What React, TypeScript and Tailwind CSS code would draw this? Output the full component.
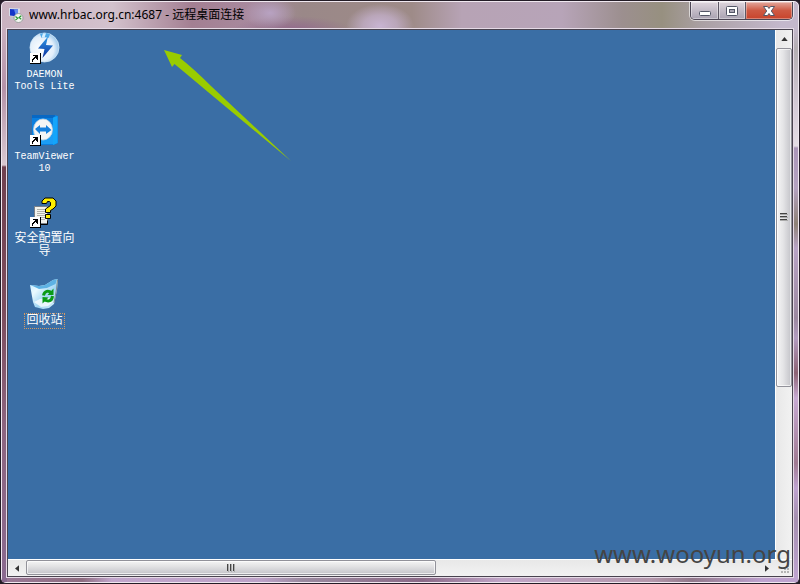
import React from "react";

const mono = "font-['Liberation_Mono','Noto_Sans_CJK_SC',monospace]";
const ui = "font-['Noto_Sans','Noto_Sans_CJK_SC',sans-serif]";

function ShortcutBadge() {
  return (
    <g shapeRendering="crispEdges">
      <rect x="1" y="21" width="11" height="11" fill="#000" />
      <rect x="1" y="21" width="10" height="10" fill="#fff" />
      <path d="M4 23h5v5h-1v-1h-1v-1h-1v1h-1v1h-1v2h-1v-3h1v-1h1v-1h1v-1h-2z" fill="#000" />
    </g>
  );
}

function DaemonIcon() {
  return (
    <svg viewBox="0 0 32 32" className="size-8 shrink-0" aria-hidden="true">
      <defs>
        <radialGradient id="disc" cx="0.4" cy="0.55" r="0.6">
          <stop offset="0" stopColor="#ffffff" />
          <stop offset="0.7" stopColor="#e3effa" />
          <stop offset="1" stopColor="#9cc8ec" />
        </radialGradient>
        <linearGradient id="bolt" x1="0" y1="0" x2="0" y2="1">
          <stop offset="0" stopColor="#2f9be8" />
          <stop offset="1" stopColor="#0b2f9e" />
        </linearGradient>
      </defs>
      <circle cx="15.500" cy="15.500" r="14.500" fill="url(#disc)" stroke="#d4e8f8" strokeWidth="0.8" />
      <path d="M11 1.800A14.500 14.500 0 0 1 21 2l-1.500 4a10 10 0 0 0-7 0z" fill="#4da8e8" />
      <path d="M14 1.200h3l-1.500 4.500h-3z" fill="#d6efff" />
      <path d="M19 4.500 9 16.500l6.500.5L13.500 26 24 13.500l-7-.5z" fill="url(#bolt)" />
      <ShortcutBadge />
    </svg>
  );
}

function TeamViewerIcon() {
  return (
    <svg viewBox="0 0 32 32" className="size-8 shrink-0" aria-hidden="true">
      <path d="M3 1h23l3 1v27l-4 2H3z" fill="#0a7fe0" />
      <path d="M3 1h23l-1 3H3z" fill="#0868c4" />
      <path d="M24 3.500l4.500-1.500v27L24 31z" fill="#14a5fa" />
      <path d="M4 18h20v12H4z" fill="#1b9df5" />
      <ellipse cx="14" cy="15.500" rx="9.500" ry="10.500" fill="#f5f5f5" stroke="#c9d5de" strokeWidth="0.8" />
      <path d="M6 15l5-4v2.500h6V11l5.500 5-5.500 4v-2.500h-6V20z" fill="#1680dd" />
      <ShortcutBadge />
    </svg>
  );
}

function SecurityWizardIcon() {
  return (
    <svg viewBox="0 0 32 32" className="size-8 shrink-0" aria-hidden="true">
      <path d="M5.500 10.500h13v17h-13z" fill="#f4f4ee" stroke="#7b8188" />
      <path d="M8 13.500h8M8 15.500h8M8 17.500h8M8 19.500h8M8 21.500h8M8 23.500h8" stroke="#b2b2aa" />
      <path d="M12 28.500h6.500v-4" fill="none" stroke="#000" />
      <path
        d="M13 7.500V5l3-3h8l3 3v5l-3 3-2.500 1.500v2h-5v-3.500l5-3.500V6.500l-1-1h-2l-1 2zM16.500 18.500h5v4h-5z"
        fill="#ffee00"
        stroke="#000"
      />
      <ShortcutBadge />
    </svg>
  );
}

function RecycleBinIcon() {
  return (
    <svg viewBox="0 0 32 32" className="size-8 shrink-0" aria-hidden="true">
      <defs>
        <linearGradient id="bin" x1="0" y1="0" x2="1" y2="1">
          <stop offset="0" stopColor="#bfe8ff" />
          <stop offset="0.3" stopColor="#e9f9ff" />
          <stop offset="0.6" stopColor="#9fd5f4" />
          <stop offset="1" stopColor="#e6f6fc" />
        </linearGradient>
      </defs>
      <path d="M1 7l9 1 6-1 8-5 4-1 1 1-1 10-3 14-5 4-6 1-8-2-2-5z" fill="url(#bin)" />
      <path d="M1.500 7l8.500 1 6-1 8-5 4-1-1.500 5-8.500 4-8 1z" fill="#5eb2e4" />
      <path d="M28.500 2l-1 9-2.500 14" fill="none" stroke="#7e8d91" />
      <path d="M5 24l6-3 9-1 4 4-5 4-7 1z" fill="#fff" opacity="0.750" />
      <g fill="none" stroke="#0a9b16" strokeWidth="3">
        <path d="M14.500 17.500c1-5 5-5 8-3" />
        <path d="M23.500 18c-.5 5-4 6-8 4" />
      </g>
      <path d="M24.500 10.500v6.500h-6zM13.500 25.500V19l6 .5z" fill="#0a9b16" />
    </svg>
  );
}

function RemoteDesktopIcon() {
  return (
    <svg viewBox="0 0 16 16" className="size-4 shrink-0" aria-hidden="true">
      <path d="M1 1l11 .5v9L1 9z" fill="#d6dde8" />
      <path d="M2 2l8 .5v7L2 8.500z" fill="#1435c8" />
      <path d="M6 2.300l4 .2v7l-2-.3z" fill="#638bf0" />
      <path d="M2 10l5 1v2l-4-1z" fill="#bfc5cd" />
      <circle cx="10.500" cy="11" r="4.500" fill="#f3f5f1" stroke="#8d9690" strokeWidth="0.8" />
      <path d="M7.500 9.500l2.200 1.800-2.200 1.700M13.300 8.800l-2.200 1.800 2.200 1.700" fill="none" stroke="#27992f" strokeWidth="1.200" />
    </svg>
  );
}

const shortcuts = [
  { icon: <DaemonIcon />, lines: ["DAEMON", "Tools Lite"], label: "mt-[5px] text-[10px] leading-3" },
  { icon: <TeamViewerIcon />, lines: ["TeamViewer", "10"], label: "mt-[5px] text-[10px] leading-3" },
  { icon: <SecurityWizardIcon />, lines: ["安全配置向", "导"], label: "mt-[5px] text-xs leading-[13px]" },
  {
    icon: <RecycleBinIcon />,
    lines: ["回收站"],
    label: "mt-[3px] border border-dotted border-[#d39a63] px-px text-xs leading-[14px]",
  },
];

const glassButton =
  "flex items-center justify-center border-r border-[#5d5764] bg-linear-to-b from-[#ded5dc] via-[#c5bdc8] via-45% to-[#aaa3b2] shadow-[inset_0_0_0_1px_#ffffff66]";

function TitleBar() {
  return (
    <header className="flex h-[26px] shrink-0 items-start pr-[5px] pl-1.5">
      <div className="flex h-[26px] min-w-0 flex-1 items-center gap-[5px]">
        <RemoteDesktopIcon />
        <h1 className={`${ui} truncate text-xs leading-4 text-black`}>www.hrbac.org.cn:4687 - 远程桌面连接</h1>
      </div>
      <div className="flex h-[18px] overflow-hidden rounded-b-[5px] border border-t-0 border-[#4c4654] shadow-[0_0_0_1px_#ffffff99]">
        <button aria-label="最小化" className={`${glassButton} w-7`}>
          <svg viewBox="0 0 14 12" className="h-3 w-3.5"><rect x="1.500" y="6.500" width="11" height="4" rx="1" fill="#fff" stroke="#535666" /></svg>
        </button>
        <button aria-label="最大化" className={`${glassButton} w-[27px]`}>
          <svg viewBox="0 0 14 12" className="h-3 w-3.5"><rect x="1.500" y="1.500" width="11" height="9" rx="1" fill="#fff" stroke="#535666" /><rect x="4.500" y="4.500" width="5" height="3" fill="#aaa6b4" stroke="#535666" /></svg>
        </button>
        <button aria-label="关闭" className="flex w-[46px] items-center justify-center bg-linear-to-b from-[#e2a79d] via-[#ce5943] via-50% to-[#c8432b] shadow-[inset_0_0_0_1px_#ffffff55]">
          <svg viewBox="0 0 14 12" className="h-3 w-3.5"><path d="M1.500 1.500h4L7 3.500l1.500-2h4L9.300 6l3.200 4.500h-4L7 8.500l-1.500 2h-4L4.700 6z" fill="#fff" stroke="#535666" /></svg>
        </button>
      </div>
    </header>
  );
}

function VerticalScrollbar() {
  return (
    <div className="flex w-[17px] shrink-0 flex-col border-l border-white bg-linear-to-r from-[#e8e8e8] to-[#f2f2f2]">
      <button aria-label="向上" className="flex h-[18px] shrink-0 items-center justify-center">
        <svg viewBox="0 0 8 5" className="h-1 w-[7px]"><path d="M4 0l4 5H0z" fill="#333" /></svg>
      </button>
      <div className="min-h-0 flex-1">
        <div className="flex h-2/3 items-center justify-center rounded-xs border border-[#92929a] bg-linear-to-r from-[#f5f5f5] via-[#e4e4e6] via-45% to-[#c4c4c9] shadow-[inset_0_0_0_1px_#ffffffaa]">
          <svg viewBox="0 0 8 9" className="h-[9px] w-2" shapeRendering="crispEdges"><path d="M0 .5h7M0 3.500h7M0 6.500h7" stroke="#444" /><path d="M0 1.500h8M0 4.500h8M0 7.500h8" stroke="#aaa" /></svg>
        </div>
      </div>
      <button aria-label="向下" className="flex h-[2px] shrink-0" />
    </div>
  );
}

function HorizontalScrollbar() {
  return (
    <div className="flex h-[17px] shrink-0 border-t border-white bg-linear-to-b from-[#e8e8e8] to-[#f2f2f2]">
      <button aria-label="向左" className="flex w-[18px] shrink-0 items-center justify-center">
        <svg viewBox="0 0 5 8" className="h-[7px] w-1"><path d="M0 4l5-4v8z" fill="#333" /></svg>
      </button>
      <div className="min-w-0 flex-1">
        <div className="flex h-[15px] w-[56%] items-center justify-center rounded-xs border border-[#92929a] bg-linear-to-b from-[#f5f5f5] via-[#e0e0e2] via-45% to-[#c4c4c9] shadow-[inset_0_0_0_1px_#ffffffaa]">
          <svg viewBox="0 0 9 8" className="h-2 w-[9px]" shapeRendering="crispEdges"><path d="M1.500 0v7M4.500 0v7M7.500 0v7" stroke="#444" /><path d="M2.500 0v8M5.500 0v8M8.500 0v8" stroke="#aaa" /></svg>
        </div>
      </div>
      <button aria-label="向右" className="flex w-[17px] shrink-0 items-center justify-center">
        <svg viewBox="0 0 5 8" className="h-[7px] w-1"><path d="M0 0l5 4-5 4z" fill="#333" /></svg>
      </button>
      <div className="flex w-[17px] shrink-0 items-end justify-end p-0.5">
        <svg viewBox="0 0 9 9" className="size-[9px]" fill="#b4b4b4"><path d="M6 0h2v2H6zM3 3h2v2H3zM6 3h2v2H6zM0 6h2v2H0zM3 6h2v2H3zM6 6h2v2H6z" /></svg>
      </div>
    </div>
  );
}

function Desktop() {
  return (
    <main className="relative min-w-0 flex-1 bg-[#3a6ea5]">
      <ul className="flex w-[73px] flex-col gap-[22px] pt-0.5">
        {shortcuts.map((s) => (
          <li key={s.lines[0]} className="flex h-15 flex-col items-center">
            {s.icon}
            <span className={`${mono} ${s.label} text-center text-white`}>
              {s.lines.map((line) => (
                <span key={line} className="block whitespace-nowrap">
                  {line}
                </span>
              ))}
            </span>
          </li>
        ))}
      </ul>
      <svg viewBox="0 0 128 112" className="absolute top-5 left-[156px] h-28 w-32" aria-hidden="true">
        <path d="M0 0l18 5-2 3q14 11 31 28l80 75L44 42Q25 26 10.500 14L8 17z" fill="#99cc00" />
      </svg>
    </main>
  );
}

export default function App() {
  return (
    <div className="flex h-screen flex-col bg-[#231c26]">
      <div className="relative flex min-h-0 flex-1 flex-col overflow-hidden rounded-[6px] border border-[#231c26] bg-[#b39bb8]">
        <div
          className="flex min-h-0 flex-1 flex-col rounded-[5px] border border-[#f0e8f0] bg-[radial-gradient(ellipse_26px_16px_at_268px_11px,#b8a2c2,transparent),radial-gradient(ellipse_34px_22px_at_378px_24px,#c8b4d2,#c8b4d2aa_50%,transparent),radial-gradient(ellipse_60px_14px_at_290px_28px,#926a8c,transparent),linear-gradient(90deg,#c9b2c0_0,#d3c2cd_110px,#a37f92_190px,#a88a9e_250px,#9a8888_300px,#9e8b88_410px,#b7a3b5_460px,#b7a4b8_560px,#9c8f8f_620px,#979080_660px,#aaa0a4_700px,#c4b8cc_780px)] bg-[length:100%_30px] bg-no-repeat"
        >
          <TitleBar />
          <div className="flex min-h-0 flex-1 flex-col bg-[linear-gradient(90deg,#9c7a98,#8e6c80_80px,#c2a6cc_110px,#bda2c8_260px,#9b8aa0_300px,#8c6a88_420px,#c2a6c8_500px,#b598ac_650px,#93798c_690px,#bfa3d0_760px)] bg-bottom bg-[length:100%_5px] bg-no-repeat">
            <div className="flex min-h-0 flex-1 bg-[linear-gradient(180deg,#c9b0bf_0,#b492a8_60px,#d8c8d0_137px,#704150_139px,#7d4c5c_280px,#8d6580_400px,#8a6a90_100%)] bg-[length:5px_100%] bg-no-repeat pb-1 pl-1">
              <div className="flex min-w-0 flex-1 flex-col border border-[#e5dae6]">
                <div className="flex min-h-0 flex-1 flex-col border border-[#49434f]">
                  <div className="flex min-h-0 flex-1">
                    <Desktop />
                    <VerticalScrollbar />
                  </div>
                  <HorizontalScrollbar />
                </div>
              </div>
              <div className="w-1 shrink-0 bg-[linear-gradient(180deg,#c4b8cc,#b4aeb2_20px,#d5cbd8_80px,#e4dde4_118px,#ab96b8_120px,#b5a2c0_160px,#8e8176_196px,#b8a3c6_220px,#9c88a0_290px,#b39cc0_310px,#8d6274_345px,#c7a9d2_370px,#a07a92_435px,#bfa3d0_460px,#a58fb0_490px,#bfa3d0)]" />
            </div>
          </div>
        </div>
      </div>
      <p className={`${ui} pointer-events-none absolute right-[9px] bottom-3.5 text-2xl leading-8 text-[#444444]`}>www.wooyun.org</p>
    </div>
  );
}
